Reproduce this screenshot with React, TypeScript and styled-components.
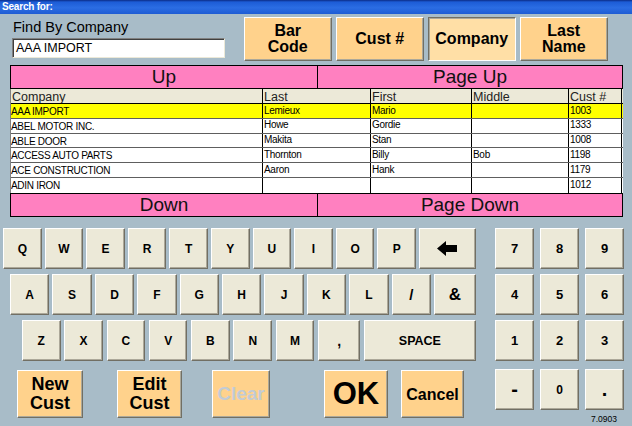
import React from 'react';
import styled, { createGlobalStyle, css } from 'styled-components';

const GlobalStyle = createGlobalStyle`
  html, body { margin: 0; padding: 0; background: #A8BCC8; }
  body { font-family: "Liberation Sans", Arial, sans-serif; }
  * { box-sizing: border-box; }
`;

const Window = styled.div`
  width: 632px;
  height: 426px;
  background: #A8BCC8;
  overflow: hidden;
  display: flex;
  flex-direction: column;
`;

const TitleBar = styled.div`
  height: 14px;
  flex: none;
  background: linear-gradient(to bottom, #0B2C86 0px, #1C5CD6 2px, #2B6DE3 55%, #1E5CD4 100%);
  color: #fff;
  font-weight: bold;
  font-size: 10px;
  line-height: 14px;
  padding-left: 2px;
  letter-spacing: -0.2px;
`;

const TopSection = styled.div`
  display: flex;
  align-items: flex-start;
  padding: 3px 0 0 12px;
  height: 51px;
  flex: none;
`;

const SearchBlock = styled.div`
  width: 213px;
  margin-right: 19px;
  display: flex;
  flex-direction: column;
`;

const SearchLabel = styled.div`
  margin-top: 2px;
  padding-left: 1px;
  font-size: 14.5px;
  line-height: 17px;
  color: #000;
`;

const SearchInput = styled.div`
  margin-top: 2px;
  height: 20px;
  width: 213px;
  background: #fff;
  border-top: 1px solid #808080;
  border-left: 1px solid #808080;
  border-bottom: 1px solid #ECE9D8;
  border-right: 1px solid #ECE9D8;
  box-shadow: inset 1px 1px 0 #404040;
  font-size: 12.5px;
  line-height: 18px;
  padding-left: 3px;
  color: #000;
`;

const ModeButtons = styled.div`
  display: flex;
  gap: 4.5px;
`;

const raised = css`
  border-top: 1px solid #FFFFFF;
  border-left: 1px solid #FFFFFF;
  border-bottom: 1px solid #716F64;
  border-right: 1px solid #716F64;
  box-shadow: inset -1px -1px 0 #ACA899;
`;

const sunken = css`
  border-top: 1px solid #716F64;
  border-left: 1px solid #716F64;
  border-bottom: 1px solid #FFFFFF;
  border-right: 1px solid #FFFFFF;
  box-shadow: inset 1px 1px 0 #ACA899;
`;

const ButtonBase = styled.button`
  margin: 0;
  padding: 0;
  font-family: "Liberation Sans", Arial, sans-serif;
  font-weight: bold;
  color: #000;
  display: flex;
  align-items: center;
  justify-content: center;
  text-align: center;
  cursor: pointer;
  outline: none;
`;

const ModeButton = styled(ButtonBase)<{ $active?: boolean }>`
  width: 87.5px;
  height: 44px;
  font-size: 16px;
  line-height: 16px;
  background: ${p => (p.$active ? '#FFDFA6' : '#FFD28C')};
  ${p => (p.$active ? sunken : raised)}
`;

const ListPanel = styled.div`
  margin-left: 10px;
  width: 613px;
  flex: none;
`;

const PagerRow = styled.div`
  display: grid;
  grid-template-columns: 307px 1fr;
  height: 24px;
  border: 1px solid #000;
  background: #FF80C0;
`;

const PagerCell = styled.div<{ $divider?: boolean }>`
  font-size: 19px;
  line-height: 21px;
  text-align: center;
  color: #111;
  ${p => p.$divider && 'border-right: 1px solid #000;'}
`;

const GridTable = styled.div`
  height: 104px;
  border-left: 1px solid #808080;
  background: #fff;
`;

const cols = '252px 108px 101px 97px 53px';

const TableRow = styled.div<{ $kind: 'header' | 'selected' | 'normal' }>`
  display: grid;
  grid-template-columns: ${cols};
  height: ${p => (p.$kind === 'header' ? '15px' : '14.83px')};
  border-bottom: 1px solid ${p => (p.$kind === 'header' ? '#000' : '#5E5E5E')};
  background: ${p =>
    p.$kind === 'header' ? '#ECE9D8' : p.$kind === 'selected' ? '#FFFF00' : '#FFFFFF'};
  overflow: hidden;
  &:last-child { border-bottom: none; }
`;

const HeaderCell = styled.div`
  border-right: 1px solid #000;
  font-size: 12.5px;
  line-height: 14px;
  padding: 1px 0 0 1px;
  color: #222;
  white-space: nowrap;
  overflow: hidden;
`;

const DataCell = styled.div<{ $lower?: boolean }>`
  border-right: 1px solid #000;
  font-size: 10px;
  letter-spacing: -0.3px;
  line-height: 12px;
  padding: ${p => (p.$lower ? '2px 0 0 0' : '0.5px 0 0 1px')};
  color: #000;
  white-space: nowrap;
  overflow: hidden;
`;

const KeyboardArea = styled.div`
  display: flex;
  padding-top: 11px;
`;

const LeftCol = styled.div`
  width: 495px;
  display: flex;
  flex-direction: column;
`;

const KeyRow = styled.div<{ $indent: number; $gap: number }>`
  display: flex;
  height: 41px;
  margin-bottom: 5px;
  padding-left: ${p => p.$indent}px;
  gap: ${p => p.$gap}px;
`;

const Key = styled(ButtonBase)<{ $w: number; $size?: number }>`
  width: ${p => p.$w}px;
  height: 41px;
  flex: none;
  background: #ECE9D8;
  font-size: ${p => p.$size ?? 12}px;
  ${raised}
`;

const ActionRow = styled.div`
  display: flex;
  margin-top: 4px;
  height: 48px;
`;

const ActionButton = styled(ButtonBase)<{ $w: number; $ml: number; $size: number; $disabled?: boolean }>`
  width: ${p => p.$w}px;
  margin-left: ${p => p.$ml}px;
  height: 48px;
  flex: none;
  background: #FFD28C;
  font-size: ${p => p.$size}px;
  line-height: ${p => p.$size + 1}px;
  color: ${p => (p.$disabled ? '#C2CBD5' : '#000')};
  ${raised}
`;

const NumCol = styled.div`
  display: flex;
  flex-direction: column;
`;

const NumPad = styled.div`
  display: grid;
  grid-template-columns: repeat(3, 39px);
  grid-template-rows: 41px 41px 41px 44px;
  column-gap: 6px;
  row-gap: 5px;
  align-items: end;
`;

const NumKey = styled(Key)`
  width: 39px;
`;

const Version = styled.div`
  margin-top: 4px;
  width: 129px;
  padding-right: 7px;
  text-align: right;
  font-size: 8.5px;
  line-height: 10px;
  color: #000;
`;

const BackArrow = () => (
  <svg width="20" height="15" viewBox="0 0 20 15">
    <path d="M0 7.5 L9 0 V4 H20 V11 H9 V15 Z" fill="#000" />
  </svg>
);

type Row = [string, string, string, string, string];
const rows: Row[] = [
  ['AAA IMPORT', 'Lemieux', 'Mario', '', '1003'],
  ['ABEL MOTOR INC.', 'Howe', 'Gordie', '', '1333'],
  ['ABLE DOOR', 'Makita', 'Stan', '', '1008'],
  ['ACCESS AUTO PARTS', 'Thornton', 'Billy', 'Bob', '1198'],
  ['ACE CONSTRUCTION', 'Aaron', 'Hank', '', '1179'],
  ['ADIN IRON', '', '', '', '1012'],
];

const row1 = ['Q', 'W', 'E', 'R', 'T', 'Y', 'U', 'I', 'O', 'P'];
const row2 = ['A', 'S', 'D', 'F', 'G', 'H', 'J', 'K', 'L'];
const row3 = ['Z', 'X', 'C', 'V', 'B', 'N', 'M'];

export default function App() {
  return (
    <>
      <GlobalStyle />
      <Window>
        <TitleBar>Search for:</TitleBar>
        <TopSection>
          <SearchBlock>
            <SearchLabel>Find By Company</SearchLabel>
            <SearchInput>AAA IMPORT</SearchInput>
          </SearchBlock>
          <ModeButtons>
            <ModeButton>Bar<br />Code</ModeButton>
            <ModeButton>Cust #</ModeButton>
            <ModeButton $active>Company</ModeButton>
            <ModeButton>Last<br />Name</ModeButton>
          </ModeButtons>
        </TopSection>
        <ListPanel>
          <PagerRow>
            <PagerCell $divider>Up</PagerCell>
            <PagerCell>Page Up</PagerCell>
          </PagerRow>
          <GridTable>
            <TableRow $kind="header">
              <HeaderCell>Company</HeaderCell>
              <HeaderCell>Last</HeaderCell>
              <HeaderCell>First</HeaderCell>
              <HeaderCell>Middle</HeaderCell>
              <HeaderCell>Cust #</HeaderCell>
            </TableRow>
            {rows.map((r, i) => (
              <TableRow key={r[0]} $kind={i === 0 ? 'selected' : 'normal'}>
                <DataCell $lower>{r[0]}</DataCell>
                <DataCell>{r[1]}</DataCell>
                <DataCell>{r[2]}</DataCell>
                <DataCell>{r[3]}</DataCell>
                <DataCell>{r[4]}</DataCell>
              </TableRow>
            ))}
          </GridTable>
          <PagerRow>
            <PagerCell $divider>Down</PagerCell>
            <PagerCell>Page Down</PagerCell>
          </PagerRow>
        </ListPanel>
        <KeyboardArea>
          <LeftCol>
            <KeyRow $indent={3} $gap={3}>
              {row1.map(k => (
                <Key key={k} $w={38.6}>{k}</Key>
              ))}
              <Key $w={57}><BackArrow /></Key>
            </KeyRow>
            <KeyRow $indent={10} $gap={3}>
              {row2.map(k => (
                <Key key={k} $w={39.4}>{k}</Key>
              ))}
              <Key $w={39.4} $size={15}>/</Key>
              <Key $w={42} $size={17}>&amp;</Key>
            </KeyRow>
            <KeyRow $indent={22} $gap={3.8}>
              {row3.map(k => (
                <Key key={k} $w={38.5}>{k}</Key>
              ))}
              <Key $w={42} $size={14}>,</Key>
              <Key $w={112} $size={12.5}>SPACE</Key>
            </KeyRow>
            <ActionRow>
              <ActionButton $w={66} $ml={17} $size={18}>New<br />Cust</ActionButton>
              <ActionButton $w={65} $ml={34} $size={18}>Edit<br />Cust</ActionButton>
              <ActionButton $w={58} $ml={30} $size={19} $disabled>Clear</ActionButton>
              <ActionButton $w={64} $ml={54} $size={31}>OK</ActionButton>
              <ActionButton $w={63} $ml={13} $size={16}>Cancel</ActionButton>
            </ActionRow>
          </LeftCol>
          <NumCol>
            <NumPad>
              {['7', '8', '9', '4', '5', '6', '1', '2', '3'].map(k => (
                <NumKey key={k} $w={39} $size={13}>{k}</NumKey>
              ))}
              <NumKey $w={39} $size={20}>-</NumKey>
              <NumKey $w={39} $size={12}>0</NumKey>
              <NumKey $w={39} $size={20}>.</NumKey>
            </NumPad>
            <Version>7.0903</Version>
          </NumCol>
        </KeyboardArea>
      </Window>
    </>
  );
}
